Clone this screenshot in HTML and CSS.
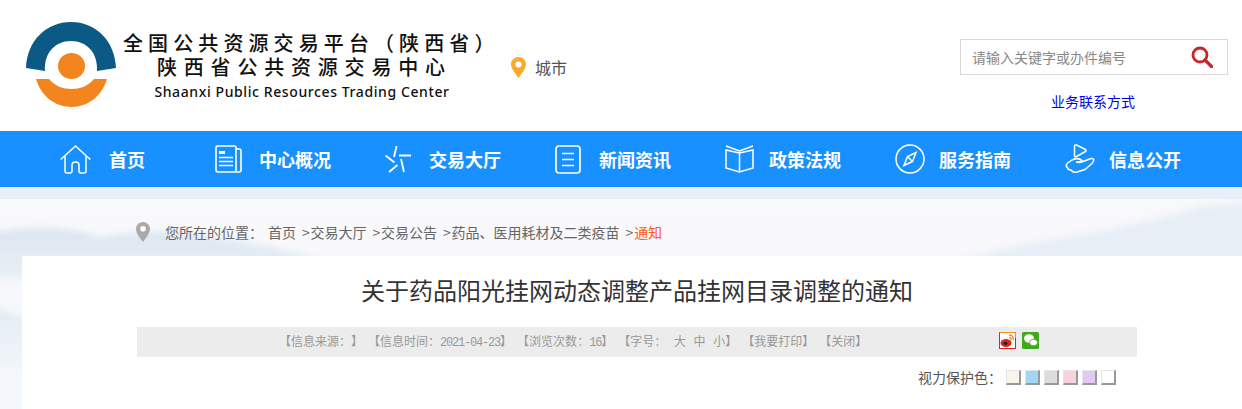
FILE: index.html
```html
<!DOCTYPE html>
<html lang="zh-CN">
<head>
    <meta charset="UTF-8">
    <title>关于药品阳光挂网动态调整产品挂网目录调整的通知</title>
    <link rel="stylesheet" href="styles.css">
</head>
<body>
    <div class="header">
        <svg class="logo-mark" width="90" height="85" viewBox="0 0 90 85">
            <path d="M0 46 C1 19 20 0 45 0 C70 0 89 19 90 46 L71 49 C72 31 61 19 45 19 C29 19 18 31 19 49 Z" fill="#0b5a86"/>
            <ellipse cx="45.500" cy="44" rx="13.500" ry="13" fill="#f3851f"/>
            <path d="M10 57 L23 57 C29 64 37 67 45.500 67 C54 67 62 64 68 57 L81 57 C76 74 62 85 45.500 85 C29 85 15 74 10 57 Z" fill="#f3851f"/>
        </svg>
        <div class="logo-text">
            <div class="logo-line1">全国公共资源交易平台（陕西省）</div>
            <div class="logo-line2">陕西省公共资源交易中心</div>
            <div class="logo-line3">Shaanxi Public Resources Trading Center</div>
        </div>
        <div class="city">
            <svg width="15" height="21" viewBox="0 0 15 21"><path d="M7.5 0 C3.3 0 0 3.3 0 7.3 C0 11.5 4.5 17 7.5 21 C10.5 17 15 11.5 15 7.3 C15 3.3 11.7 0 7.5 0 Z" fill="#f9ab2d"/><circle cx="7.5" cy="7.5" r="3" fill="#fff"/></svg>
            <span>城市</span>
        </div>
        <div class="header-right">
            <div class="search">
                <span class="search-text">请输入关键字或办件编号</span>
                <svg width="22" height="22" viewBox="0 0 22 22"><circle cx="9" cy="9" r="7" fill="none" stroke="#c9252b" stroke-width="2.8"/><path d="M14 14 L20.5 20.5" stroke="#c9252b" stroke-width="3.2" stroke-linecap="round"/></svg>
            </div>
            <a class="contact" href="#">业务联系方式</a>
        </div>
    </div>

    <div class="nav">
        <a class="nav-item first" href="#">
            <span class="nav-icon"><svg width="31" height="29" viewBox="0 0 31 29"><path d="M0.700 14.500 L15.500 1 L30.300 14.500 M5 11 V26 Q5 28 7 28 H10 Q12 28 12 26 V20 Q12 17 15.500 17 Q19 17 19 20 V26 Q19 28 21 28 H24 Q26 28 26 26 V11" fill="none" stroke="#fff" stroke-width="1.500"/></svg></span>
            <span>首页</span>
        </a>
        <a class="nav-item" href="#">
            <span class="nav-icon"><svg width="27" height="28" viewBox="0 0 27 28"><path d="M21 4 V2.500 Q21 1 19.500 1 H2.500 Q1 1 1 2.500 V25 Q1 27 3 27 H24 Q26 27 26 25 V6 Q26 4 24 4 H21 V25 Q21 27 19 27" fill="none" stroke="#fff" stroke-width="1.600"/><rect x="4" y="6" width="6" height="3" fill="#fff"/><path d="M4 12.500 H18 M4 16.500 H18 M4 20.500 H18" stroke="#fff" stroke-width="1.700"/></svg></span>
            <span>中心概况</span>
        </a>
        <a class="nav-item" href="#">
            <span class="nav-icon"><svg width="27" height="27" viewBox="0 0 27 27"><path d="M11.500 0 L9 11 M14 9.500 H26 M0.500 9.500 L9.500 16.500 M16 13 L19 26 M12.500 19 L4 26" fill="none" stroke="#fff" stroke-width="1.800"/></svg></span>
            <span>交易大厅</span>
        </a>
        <a class="nav-item" href="#">
            <span class="nav-icon"><svg width="26" height="29" viewBox="0 0 26 29"><rect x="1" y="1" width="24" height="27" rx="3" fill="none" stroke="#fff" stroke-width="1.700"/><path d="M7 8.500 H19 M7 14.500 H19 M7 20.500 H19" stroke="#fff" stroke-width="1.700"/></svg></span>
            <span>新闻资讯</span>
        </a>
        <a class="nav-item" href="#">
            <span class="nav-icon"><svg width="29" height="28" viewBox="0 0 29 28"><path d="M14.500 8 V27 M14.500 8 L1 5 V23 L14.500 27 L28 23 V5 Z M1 1 L14.500 6 L28 1" fill="none" stroke="#fff" stroke-width="1.500"/></svg></span>
            <span>政策法规</span>
        </a>
        <a class="nav-item" href="#">
            <span class="nav-icon"><svg width="30" height="30" viewBox="0 0 30 30"><circle cx="15" cy="15" r="14" fill="none" stroke="#fff" stroke-width="1.500"/><path d="M21 8.500 L17.500 17.500 L9 21.500 L12.500 12.500 Z M12.500 12.500 L17.500 17.500" fill="none" stroke="#fff" stroke-width="1.500"/></svg></span>
            <span>服务指南</span>
        </a>
        <a class="nav-item" href="#">
            <span class="nav-icon"><svg width="30" height="30" viewBox="0 0 30 30"><path d="M11.500 1 Q9.500 0.500 9.500 2.500 V11.500 Q9.500 13.500 11.500 12.500 L20.500 7.500 Q22 6.500 20.500 5.500 Z" fill="none" stroke="#fff" stroke-width="1.500"/><path d="M7 16 L2.500 19 Q0 22 2.500 23.500 Q2.500 26 6 26 Q8 29 12 28 L20 25.500 L27 19.500 Q31 14 26 14.500 L18 17.500 Q15 19 11.500 18 Q15 18 17 16.500 Q13 13 7 16 Z" fill="none" stroke="#fff" stroke-width="1.500" stroke-linejoin="round"/></svg></span>
            <span>信息公开</span>
        </a>
    </div>

    <div class="main">
        <svg class="scenery" width="1242" height="210" viewBox="0 0 1242 210">
            <defs>
                <linearGradient id="hill" x1="0" y1="0" x2="0" y2="1">
                    <stop offset="0" stop-color="#dbe6f0"/>
                    <stop offset="1" stop-color="#eaf0f6"/>
                </linearGradient>
                <linearGradient id="low" x1="0" y1="0" x2="0" y2="1">
                    <stop offset="0" stop-color="#e3ebf4"/>
                    <stop offset="1" stop-color="#f4f7fb"/>
                </linearGradient>
            </defs>
            <path d="M-10 34 Q30 26 60 30 Q85 32 100 38 Q140 32 180 33 Q225 40 270 48 L320 60 V80 H-10 Z" fill="url(#hill)"/>
            <path d="M-10 108 Q12 112 30 122 V175 H-10 Z" fill="url(#low)"/>
            <path d="M950 62 Q1020 45 1100 32 Q1170 18 1205 6 L1250 4 V70 H950 Z" fill="#e8eef6"/>
        </svg>
        <div class="crumbs">
            <svg width="14" height="20" viewBox="0 0 14 20"><path d="M7 0 C3 0 0 3 0 7 C0 11 4 16 7 20 C10 16 14 11 14 7 C14 3 11 0 7 0 Z" fill="#aaa"/><circle cx="7" cy="6.800" r="2.800" fill="#fff"/></svg>
            <span class="crumb-label">您所在的位置<span class="colon">：</span></span>
            <a href="#">首页</a><span class="sep">&gt;</span><a href="#">交易大厅</a><span class="sep">&gt;</span><a href="#">交易公告</a><span class="sep">&gt;</span><a href="#">药品、医用耗材及二类疫苗</a><span class="sep">&gt;</span><a class="current" href="#">通知</a>
        </div>
        <div class="panel">
            <div class="article">
                <h1>关于药品阳光挂网动态调整产品挂网目录调整的通知</h1>
                <div class="info-bar">
                    <div class="info-text">
                        <span>【信息来源<span class="colon">：</span>】</span>
                        <span>【信息时间<span class="colon">：</span><span class="num">2021-04-23</span>】</span>
                        <span>【浏览次数<span class="colon">：</span><span class="num">16</span>】</span>
                        <span class="size-links">【字号<span class="colon">：</span> 大 中 小】</span>
                        <span>【我要打印】</span>
                        <span>【关闭】</span>
                    </div>
                    <div class="share">
                        <svg width="17" height="17" viewBox="0 0 17 17"><rect x="0.500" y="0.500" width="16" height="16" fill="#fff" stroke="#d8261c"/><path d="M0.500 0.500 H16.500 V6" fill="none" stroke="#f58b1f"/><ellipse cx="7" cy="11" rx="5.500" ry="4" fill="#d8261c"/><ellipse cx="6.500" cy="11.300" rx="2" ry="1.600" fill="#222"/><path d="M10 3 Q14.500 3 14.500 8 M10 5.500 Q12.300 5.500 12.300 8" fill="none" stroke="#f58b1f" stroke-width="1.300"/></svg>
                        <svg width="17" height="17" viewBox="0 0 17 17"><rect width="17" height="17" rx="1.500" fill="#3fa91d"/><ellipse cx="7" cy="6.500" rx="5" ry="4.200" fill="#fff"/><ellipse cx="11.500" cy="10.500" rx="4" ry="3.300" fill="#fff" stroke="#3fa91d" stroke-width="0.800"/></svg>
                    </div>
                </div>
                <div class="eye-row">
                    <span class="eye-label">视力保护色<span class="colon">：</span></span>
                    <span class="swatch s1"></span>
                    <span class="swatch s2"></span>
                    <span class="swatch s3"></span>
                    <span class="swatch s4"></span>
                    <span class="swatch s5"></span>
                    <span class="swatch s6"></span>
                </div>
            </div>
        </div>
    </div>
</body>
</html>
```

FILE: styles.css
```css
html, body { margin: 0; padding: 0; }
body { width: 1242px; height: 409px; overflow: hidden; background: #fff; font-family: "Noto Sans CJK SC", "Liberation Sans", sans-serif; font-size: 14px; color: #333; text-spacing-trim: space-all; }
a { text-decoration: none; color: inherit; }
.colon { font-family: "Noto Sans CJK TC", sans-serif; }

.header { height: 131px; display: flex; align-items: flex-start; box-sizing: border-box; padding-left: 26px; }
.logo-mark { margin-top: 22px; flex: none; }
.logo-text { width: 372px; margin-top: 31px; color: #111; flex: none; text-align: center; white-space: nowrap; }
.logo-line1 { font-size: 20px; line-height: 24px; letter-spacing: 5.1px; text-align: left; padding-left: 7px; font-weight: 500; }
.logo-line2 { font-size: 20px; line-height: 24px; letter-spacing: 6.8px; text-align: left; padding-left: 41px; font-weight: 500; }
.logo-line3 { font-family: "Noto Sans", sans-serif; font-size: 14px; line-height: 20px; letter-spacing: 0.6px; margin-top: 3px; font-weight: 500; }
.city { display: flex; align-items: center; gap: 9px; margin: 55px 0 0 23px; font-size: 16px; color: #555; }
.header-right { margin-left: auto; margin-right: 14px; margin-top: 39px; width: 268px; display: flex; flex-direction: column; }
.search { height: 36px; box-sizing: border-box; border: 1px solid #d9d9d9; display: flex; align-items: center; justify-content: space-between; padding: 0 14px 0 12px; }
.search-text { font-size: 14px; color: #888; margin-left: -1px; }
.contact { color: #0000ee; font-size: 14px; margin-top: 16px; margin-left: 91px; line-height: 20px; }

.nav { height: 56px; background: #1890ff; display: flex; padding-left: 60px; box-sizing: border-box; }
.nav-item { display: flex; align-items: center; width: 170px; color: #fff; font-size: 18px; font-weight: 700; }
.nav-item.first { width: 155px; }
.nav-icon { width: 44px; display: flex; align-items: center; flex: none; }
.nav-item.first .nav-icon { width: 49px; }

.main { position: relative; height: 222px; background: #e8f0f7; overflow: hidden; }
.scenery { position: absolute; left: 0; top: 12px; background: linear-gradient(to bottom, #f9f9fb 0%, #f4f7fb 100%); }
.scenery path { filter: blur(3px); }
.crumbs { position: relative; height: 69px; box-sizing: border-box; padding: 35px 0 0 136px; display: flex; align-items: flex-start; color: #666; font-size: 14px; line-height: 20px; }
.crumb-label { margin: 0 5px 0 15px; }
.sep { margin: 0 0.75px 0 6px; }
.current { color: #ff5a1f; }
.panel { position: relative; margin-left: 22px; background: #fff; height: 153px; padding-left: 115px; }
.article { width: 1000px; }
h1 { margin: 0; padding-top: 18px; height: 53px; font-size: 24px; font-weight: 400; line-height: 32px; text-align: center; color: #333; }
.info-bar { height: 30px; background: #ececec; display: flex; align-items: center; box-sizing: border-box; padding-left: 142px; position: relative; }
.info-text { display: flex; gap: 5px; font-size: 12px; color: #999; white-space: pre; line-height: 16px; }
.num { font-family: "Liberation Mono", monospace; letter-spacing: -1.2px; }
.size-links { word-spacing: 5px; }
.share { display: flex; gap: 6px; margin-left: auto; margin-right: 98px; margin-top: -4px; }
.eye-row { display: flex; align-items: center; justify-content: flex-end; gap: 4px; margin-top: 10px; padding-right: 21px; font-size: 14px; color: #555; }
.swatch { box-sizing: border-box; width: 15px; height: 15px; border: 1px solid #e4e4e4; border-right: 2px solid #999; border-bottom: 2px solid #999; }
.s1 { background: #f8f5ef; }
.s2 { background: #a0d8f4; }
.s3 { background: #dcdcdc; }
.s4 { background: #f8d3de; }
.s5 { background: #e1c9f4; }
.s6 { background: #fff; }
```
